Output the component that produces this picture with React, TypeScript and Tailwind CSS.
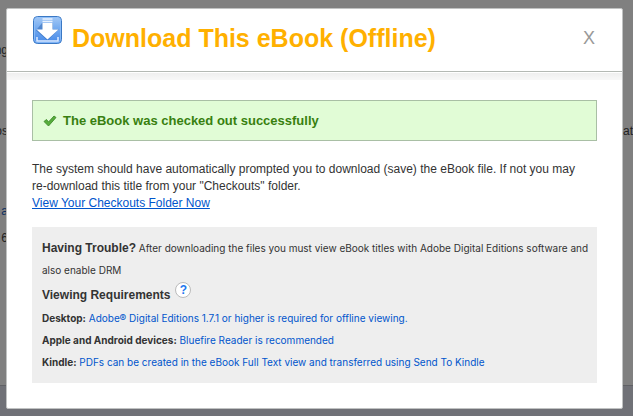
import type { ReactNode } from "react";

function DownloadIcon() {
  return (
    <svg viewBox="0 0 30 30" className="h-[30px] w-[30px] shrink-0" aria-hidden="true">
      <defs>
        <linearGradient id="tile" x1="0" y1="0" x2="0" y2="1">
          <stop offset="0" stopColor="#a4c9f6" />
          <stop offset="0.4" stopColor="#78adf0" />
          <stop offset="1" stopColor="#4488e8" />
        </linearGradient>
      </defs>
      <rect x="1.5" y="1.5" width="28" height="27" rx="4" fill="url(#tile)" stroke="#3a78c4" strokeWidth="1" />
      <rect x="2.5" y="2.5" width="26" height="25" rx="3" fill="none" stroke="#8fc0fa" strokeWidth="0.8" />
      <path d="M10.5 4h10M10.5 6.5h10" stroke="#e9f2fe" strokeWidth="1.6" />
      <path d="M10 8h11v6h6L15.500 25.500 4 15.500z" fill="#2a62ae" opacity="0.5" />
      <path d="M10.500 8h10v6.500h6L15.500 24.500 4.500 14.500h6z" fill="#fff" />
      <path d="M5 22v4h21v-4" fill="none" stroke="#deebff" strokeWidth="1.5" />
    </svg>
  );
}

function CheckIcon() {
  return (
    <svg viewBox="0 0 14 12" className="h-3 w-[14px] shrink-0" aria-hidden="true">
      <path d="M1 6.500 3.500 4.500 5.500 7 11 1l2 1.500L5.500 11z" fill="#57ad3c" stroke="#3f8b2b" strokeWidth="0.900" />
    </svg>
  );
}

function Requirement({ label, children }: { label: string; children: ReactNode }) {
  return (
    <p>
      <strong>{label}</strong>{" "}
      <a href="#requirements" className="text-[#0055cc]">{children}</a>
    </p>
  );
}

function Backdrop() {
  return (
    <div aria-hidden="true" className="absolute inset-0 flex flex-col overflow-hidden text-xs text-[#222]">
      <div className="flex grow justify-between bg-[#808080]">
        <div className="flex w-2 flex-col items-end overflow-hidden pt-[42px] leading-4">
          <span>ng</span>
          <span className="mt-[65px]">os</span>
          <span className="mt-16 text-[#0c2f60]">a</span>
          <span className="mt-[11px]">6</span>
        </div>
        <div className="w-[10px] overflow-hidden pt-[123px] leading-4">atu</div>
      </div>
      <div className="h-[31px] border-t border-[#606165] bg-[#707177]" />
    </div>
  );
}

export default function App() {
  return (
    <div className="relative min-h-screen bg-[#808080] pt-2 pr-[10px] pb-[7px] pl-[6px] font-['Liberation_Sans',Arial,sans-serif]">
      <Backdrop />
      <section
        role="dialog"
        aria-labelledby="dialog-title"
        className="relative rounded-[2px] border border-[#c0c2c2] bg-white text-[#333]"
      >
        <header className="flex h-[63px] items-start border-b border-[#b4b9b4] pt-[6px] pr-[25px] pl-[25px]">
          <DownloadIcon />
          <h1 id="dialog-title" className="ml-[10px] grow pt-2 text-[25px] leading-[30px] font-bold whitespace-nowrap text-[#ffb000]">
            Download This eBook (Offline)
          </h1>
          <button type="button" aria-label="Close" className="mt-[11px] h-6 w-4 text-center text-lg leading-6 text-[#999]">
            X
          </button>
        </header>
        <div className="mt-px h-[7px] bg-linear-to-b from-[#efefef] to-[#f8f8f8]" />
        <div className="px-[25px] pt-5 pb-[25px]">
          <div role="status" className="flex h-[41px] items-center gap-[6px] border border-[#a9bfa5] bg-[#e1fcd6] px-[10px] text-[13px] font-bold text-[#38800f]">
            <CheckIcon />
            The eBook was checked out successfully
          </div>
          <p className="mt-5 text-xs leading-[17px]">
            The system should have automatically prompted you to download (save) the eBook file. If not you may{" "}
            <span className="whitespace-nowrap">re-download</span> this title from your "Checkouts" folder.
            <br />
            <a href="#checkouts" className="text-[#0055cc] underline">View Your Checkouts Folder Now</a>
          </p>
          <div className="mt-[15px] bg-[#eee] py-[10px] pr-1 pl-[10px] font-[Inter,'Liberation_Sans',sans-serif] text-[10px] leading-[22px]">
            <p>
              <strong className="font-['Liberation_Sans',Arial,sans-serif] text-xs leading-[22px]">Having Trouble?</strong> After downloading the files you must view eBook titles with Adobe Digital Editions software and also enable DRM
            </p>
            <div className="flex h-[26px] gap-[5px] font-['Liberation_Sans',Arial,sans-serif]">
              <h2 className="pt-[3px] text-xs leading-[22px] font-bold">Viewing Requirements</h2>
              <button type="button" aria-label="Help" className="mt-px h-4 w-4 rounded-full border border-[#bbb] bg-white text-center text-xs leading-[14px] font-bold text-[#2277ee]">
                ?
              </button>
            </div>
            <Requirement label="Desktop:">Adobe® Digital Editions 1.7.1 or higher is required for offline viewing.</Requirement>
            <Requirement label="Apple and Android devices:">Bluefire Reader is recommended</Requirement>
            <Requirement label="Kindle:">PDFs can be created in the eBook Full Text view and transferred using Send To Kindle</Requirement>
          </div>
        </div>
      </section>
    </div>
  );
}
